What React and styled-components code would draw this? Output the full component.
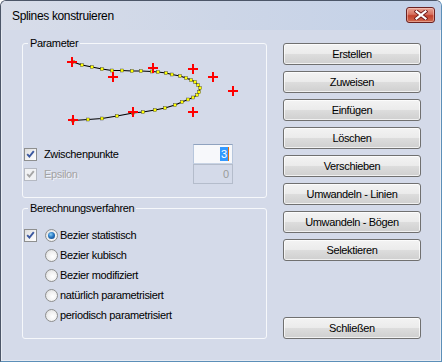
import styled, { createGlobalStyle } from "styled-components";

const GlobalStyle = createGlobalStyle`
  html, body {
    margin: 0;
    padding: 0;
    background: #ffffff;
  }
  body {
    font-family: "Liberation Sans", Arial, sans-serif;
    font-size: 11px;
  }
`;

const crosses = [
  [72, 62], [113, 77], [153, 68], [193, 69], [213, 77],
  [233, 91], [193, 112], [133, 112], [73, 120],
];

const curve = [
  [73, 62], [82, 65], [92, 67], [102, 69], [112, 70.5], [122, 70.5],
  [132, 71], [141, 71], [152, 71.5], [158, 72], [166, 73], [172, 74.5],
  [180, 76], [186, 78], [191, 80], [195, 82], [198, 85], [200, 88],
  [199, 92], [197, 95], [193, 97.5], [188, 99.5], [182, 102], [175, 105],
  [165, 108], [155, 110], [143, 112], [133, 113], [117, 116], [102, 118.5],
  [88, 119.5], [73, 120.5],
];

const buttons = [
  "Erstellen",
  "Zuweisen",
  "Einfügen",
  "Löschen",
  "Verschieben",
  "Umwandeln - Linien",
  "Umwandeln - Bögen",
  "Selektieren",
];

const methods = [
  "Bezier statistisch",
  "Bezier kubisch",
  "Bezier modifiziert",
  "natürlich parametrisiert",
  "periodisch parametrisiert",
];

function CheckMark({ disabled }) {
  return (
    <svg width="11" height="11" viewBox="0 0 11 11">
      <path
        d="M2.2 5.2 L4.4 7.6 L8.8 2.2"
        fill="none"
        stroke={disabled ? "#a6a6a6" : "#3b58a0"}
        strokeWidth="1.9"
      />
    </svg>
  );
}

function Check({ disabled }) {
  return (
    <CheckBox $disabled={disabled}>
      <CheckMark disabled={disabled} />
    </CheckBox>
  );
}

function CloseIcon() {
  return (
    <svg width="14" height="10" viewBox="0 0 14 10">
      <path d="M2.5 1.5 L11.5 8.5 M11.5 1.5 L2.5 8.5" stroke="#6e1a1a" strokeWidth="4" strokeLinecap="square" />
      <path d="M2.5 1.5 L11.5 8.5 M11.5 1.5 L2.5 8.5" stroke="#ffffff" strokeWidth="2.2" strokeLinecap="square" />
    </svg>
  );
}

export default function App() {
  const line = curve.map(([x, y]) => `${x},${y}`).join(" ");
  return (
    <>
      <GlobalStyle />
      <Window>
        <TitleBar>
          <Title>Splines konstruieren</Title>
          <CloseButton>
            <CloseIcon />
          </CloseButton>
        </TitleBar>
        <Body>
          <LeftColumn>
            <Group $pad={13}>
              <Legend>Parameter</Legend>
              <Preview width="243" height="94" viewBox="23 50 243 94">
                <polyline points={line} fill="none" stroke="#000" strokeWidth="1.2" />
                {curve.map(([x, y], i) => (
                  <rect
                    key={i}
                    x={x - 1.5}
                    y={y - 1.5}
                    width="3"
                    height="3"
                    fill="#ffff00"
                    stroke="#333"
                    strokeWidth="0.4"
                  />
                ))}
                {crosses.map(([x, y], i) => (
                  <path
                    key={i}
                    d={`M${x - 5} ${y} H${x + 5} M${x} ${y - 5} V${y + 5}`}
                    stroke="#ff0000"
                    strokeWidth="2"
                  />
                ))}
              </Preview>
              <ParamRow>
                <Check />
                <Label>Zwischenpunkte</Label>
                <Field>
                  <Selected>3</Selected>
                </Field>
              </ParamRow>
              <ParamRow>
                <Check disabled />
                <Label $disabled>Epsilon</Label>
                <Field $disabled>0</Field>
              </ParamRow>
            </Group>
            <Group $pad={13}>
              <Legend>Berechnungsverfahren</Legend>
              <MethodList>
                {methods.map((m, i) => (
                  <MethodRow key={m}>
                    <Slot>{i === 0 && <Check />}</Slot>
                    <Radio $checked={i === 0} />
                    <Label>{m}</Label>
                  </MethodRow>
                ))}
              </MethodList>
            </Group>
          </LeftColumn>
          <ButtonColumn>
            {buttons.map((b) => (
              <Button key={b}>{b}</Button>
            ))}
            <Button $bottom>Schließen</Button>
          </ButtonColumn>
        </Body>
      </Window>
    </>
  );
}

const Window = styled.div`
  width: 442px;
  height: 362px;
  box-sizing: border-box;
  border: 1px solid #4c5668;
  border-right-color: #5c8fb8;
  border-bottom-color: #5c8fb8;
  border-radius: 6px 6px 0 0;
  background: #d4dae9;
  box-shadow: inset 0 0 0 1px rgba(255, 255, 255, 0.45);
  display: flex;
  flex-direction: column;
  overflow: hidden;
`;

const TitleBar = styled.div`
  height: 29px;
  display: flex;
  align-items: center;
  justify-content: space-between;
  padding: 0 6px 0 11px;
  background: linear-gradient(90deg, #d8dde9 0%, #cdd6e7 50%, #c3d1e8 100%);
`;

const Title = styled.span`
  font-size: 12px;
  letter-spacing: -0.35px;
  color: #000;
  margin-top: 1px;
`;

const CloseButton = styled.div`
  width: 29px;
  height: 16px;
  margin-bottom: 2px;
  box-sizing: border-box;
  border: 1px solid #6b2222;
  border-radius: 3px;
  background: linear-gradient(180deg, #e8a393 0%, #d6705f 45%, #c2402c 55%, #cf6a4f 100%);
  box-shadow: inset 0 0 0 1px rgba(255, 220, 210, 0.45);
  display: flex;
  align-items: center;
  justify-content: center;
`;

const Body = styled.div`
  flex: 1;
  display: flex;
  gap: 16px;
  padding: 6px 0 22px 21px;
`;

const LeftColumn = styled.div`
  width: 245px;
  display: flex;
  flex-direction: column;
  gap: 3px;
`;

const Group = styled.fieldset`
  margin: 0;
  min-width: 0;
  padding: 0 0 ${(p) => p.$pad}px 0;
  border: 1px solid #f6f8fb;
  border-radius: 3px;
`;

const Legend = styled.legend`
  margin-left: 5px;
  padding: 0 2px;
  line-height: 14px;
  font-size: 11px;
  letter-spacing: -0.35px;
  color: #000;
`;

const Preview = styled.svg`
  display: block;
`;

const ParamRow = styled.div`
  height: 20px;
  display: flex;
  align-items: center;
  padding-left: 1px;
`;

const CheckBox = styled.span`
  width: 13px;
  height: 13px;
  box-sizing: border-box;
  border: 1px solid ${(p) => (p.$disabled ? "#b5b9c2" : "#8e8f8f")};
  background: ${(p) =>
    p.$disabled
      ? "#f1f2f4"
      : "linear-gradient(135deg, #dcdcdc 0%, #f4f4f4 60%, #ffffff 100%)"};
  display: flex;
  align-items: center;
  justify-content: center;
  flex-shrink: 0;
`;

const Label = styled.span`
  margin-left: 7px;
  font-size: 11px;
  letter-spacing: -0.35px;
  color: ${(p) => (p.$disabled ? "#a3a3a3" : "#000")};
  text-shadow: ${(p) => (p.$disabled ? "1px 1px 0 rgba(255,255,255,0.7)" : "none")};
  white-space: nowrap;
`;

const Field = styled.div`
  margin-left: auto;
  margin-right: 33px;
  width: 40px;
  height: 20px;
  box-sizing: border-box;
  border: 1px solid;
  border-color: ${(p) =>
    p.$disabled ? "#b4bccb" : "#8fa2bf #b7c6dc #c8d3e4 #b7c6dc"};
  background: ${(p) => (p.$disabled ? "transparent" : "#f7f8fb")};
  color: ${(p) => (p.$disabled ? "#9a9a9a" : "#000")};
  font-size: 11px;
  display: flex;
  align-items: center;
  justify-content: flex-end;
  padding-right: 3px;
`;

const Selected = styled.span`
  background: #3399ff;
  color: #fff;
  padding: 0 1px;
  line-height: 14px;
  border-right: 1px solid #e07010;
`;

const MethodList = styled.div`
  padding-top: 10px;
  display: flex;
  flex-direction: column;
`;

const MethodRow = styled.div`
  height: 20px;
  display: flex;
  align-items: center;
  padding-left: 1px;
  gap: 8px;
  & > span:last-child {
    margin-left: -6px;
  }
`;

const Slot = styled.span`
  width: 13px;
  height: 13px;
  display: flex;
`;

const Radio = styled.span`
  width: 13px;
  height: 13px;
  box-sizing: border-box;
  border-radius: 50%;
  border: 1px solid #8e8f8f;
  background: radial-gradient(circle at 60% 60%, #ffffff 0%, #f0f0f0 50%, #d2d2d2 100%);
  display: flex;
  align-items: center;
  justify-content: center;
  &::after {
    content: "";
    display: ${(p) => (p.$checked ? "block" : "none")};
    width: 7px;
    height: 7px;
    border-radius: 50%;
    background: radial-gradient(circle at 40% 35%, #8ad0f7 0%, #2a78c2 45%, #0f3f7a 100%);
  }
`;

const ButtonColumn = styled.div`
  width: 138px;
  margin-top: 7px;
  display: flex;
  flex-direction: column;
  gap: 6px;
`;

const Button = styled.button`
  width: 138px;
  height: 22px;
  margin: 0;
  margin-top: ${(p) => (p.$bottom ? "auto" : "0")};
  padding: 0;
  box-sizing: border-box;
  border: 1px solid #707070;
  border-radius: 3px;
  background: linear-gradient(180deg, #f3f3f3 0%, #ebebeb 49%, #dddddd 51%, #cfcfcf 100%);
  box-shadow: inset 0 0 0 1px rgba(255, 255, 255, 0.7);
  font-family: "Liberation Sans", Arial, sans-serif;
  font-size: 11px;
  letter-spacing: -0.35px;
  color: #000;
  text-align: center;
`;
